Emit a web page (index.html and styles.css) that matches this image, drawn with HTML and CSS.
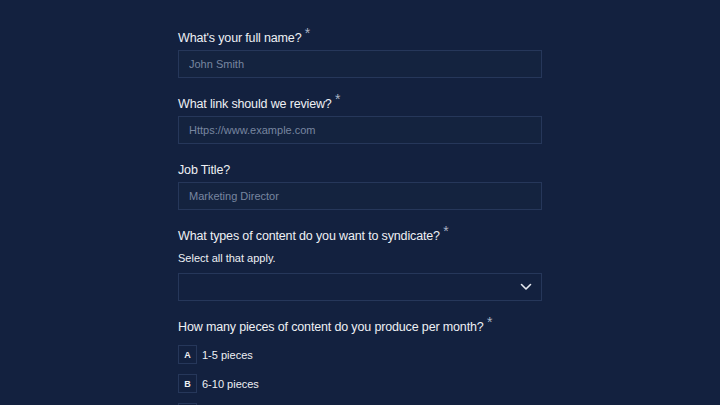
FILE: index.html
```html
<!DOCTYPE html>
<html lang="en">

<head>
    <meta charset="UTF-8">
    <meta name="viewport" content="width=device-width, initial-scale=1.0">
    <title>Content Syndication Form</title>
    <link rel="stylesheet" href="styles.css">
</head>

<body>
    <form class="form">
        <div class="field">
            <label for="fullName">What's your full name? <span class="req">*</span></label>
            <input type="text" id="fullName" placeholder="John Smith">
        </div>

        <div class="field">
            <label for="reviewLink">What link should we review? <span class="req">*</span></label>
            <input type="text" id="reviewLink" placeholder="Https://www.example.com">
        </div>

        <div class="field">
            <label for="jobTitle">Job Title?</label>
            <input type="text" id="jobTitle" placeholder="Marketing Director">
        </div>

        <div class="field">
            <label for="contentTypes">What types of content do you want to syndicate? <span class="req">*</span></label>
            <p class="hint">Select all that apply.</p>
            <div class="select-box" id="contentTypes">
                <svg class="chevron" width="12" height="8" viewBox="0 0 12 8">
                    <path d="M1.5 1.5 L6 6 L10.5 1.5" fill="none" stroke="#e6e9ef" stroke-width="1.6" stroke-linecap="round" stroke-linejoin="round"/>
                </svg>
            </div>
        </div>

        <div class="field">
            <label>How many pieces of content do you produce per month? <span class="req">*</span></label>
            <div class="options">
                <div class="option"><span class="key">A</span>1-5 pieces</div>
                <div class="option"><span class="key">B</span>6-10 pieces</div>
                <div class="option"><span class="key">C</span>11-20 pieces</div>
            </div>
        </div>
    </form>
</body>

</html>
```

FILE: styles.css
```css
/* Form styles */
body {
    margin: 0;
    font-family: "Liberation Sans", Arial, sans-serif;
    background-color: #13213f;
    color: #eef0f4;
}

.form {
    width: 364px;
    margin: 0 auto;
    padding-top: 29px;
}

.field {
    margin-bottom: 17px;
}

.field label {
    display: block;
    font-size: 12.5px;
    letter-spacing: -0.15px;
    line-height: 18px;
    margin-bottom: 3px;
}

.req {
    font-size: 14px;
    line-height: 0;
    color: #a9b2c3;
    position: relative;
    top: -4px;
}

input[type="text"] {
    display: block;
    box-sizing: border-box;
    width: 100%;
    height: 28px;
    padding: 0 10px;
    background-color: #14233f;
    border: 1px solid #26375a;
    color: #eef0f4;
    font-family: inherit;
    font-size: 11px;
    outline: none;
}

input::placeholder {
    color: #7886a0;
}

.hint {
    font-size: 11px;
    line-height: 16px;
    margin: 5px 0 7px;
}

.select-box {
    box-sizing: border-box;
    height: 28px;
    border: 1px solid #26375a;
    display: flex;
    align-items: center;
    justify-content: flex-end;
    padding-right: 9px;
}

.options {
    display: flex;
    flex-direction: column;
    gap: 10px;
    padding-top: 6px;
}

.option {
    display: flex;
    align-items: center;
    gap: 5px;
    font-size: 11px;
}

.key {
    box-sizing: border-box;
    width: 19px;
    height: 19px;
    border: 1px solid #26375a;
    display: flex;
    align-items: center;
    justify-content: center;
    font-size: 9px;
    font-weight: bold;
}
```
